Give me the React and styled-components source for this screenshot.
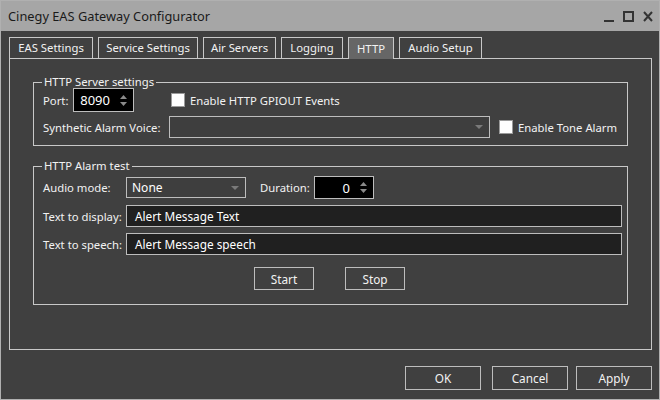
import styled, { createGlobalStyle } from "styled-components";

const GlobalStyle = createGlobalStyle`
  html, body {
    margin: 0;
    padding: 0;
    background: #404040;
  }
  * {
    box-sizing: border-box;
  }
`;

const FONT = `"Noto Sans", "Open Sans", sans-serif`;

const Window = styled.div`
  width: 660px;
  height: 400px;
  display: flex;
  flex-direction: column;
  border: 1px solid #b0b0b0;
  background: #404040;
  font-family: ${FONT};
  font-size: 11.3px;
  color: #f2f2f2;
  overflow: hidden;
`;

const TitleBar = styled.div`
  height: 30px;
  flex: none;
  display: flex;
  align-items: center;
  justify-content: space-between;
  padding: 0 6px 0 7px;
  background: #a6a6a6;
  color: #1a1a1a;
  font-size: 12.8px;
`;

const Controls = styled.div`
  display: flex;
  align-items: center;
  gap: 9px;
  padding-top: 2px;
`;

const Body = styled.div`
  flex: 1;
  display: flex;
  flex-direction: column;
  padding: 6px 7px 0 8px;
`;

const TabStrip = styled.div`
  display: flex;
  gap: 5px;
  height: 21px;
  position: relative;
  z-index: 1;
`;

const Tab = styled.div`
  width: ${(p) => p.$w}px;
  height: ${(p) => (p.$active ? 22 : 21)}px;
  display: flex;
  align-items: center;
  justify-content: center;
  border: 1px solid #c8c8c8;
  border-bottom: none;
  background: ${(p) => (p.$active ? "#666666" : "#404040")};
  color: #f2f2f2;
  padding-bottom: 1px;
`;

const Panel = styled.div`
  height: 292px;
  border: 1px solid #c8c8c8;
  padding: 17px 23px 0 23px;
  display: flex;
  flex-direction: column;
  gap: 14px;
`;

const Group = styled.fieldset`
  margin: 0;
  min-width: 0;
  border: 1px solid #c8c8c8;
  padding: 0 5px ${(p) => p.$pb}px 9px;
  display: flex;
  flex-direction: column;
  gap: ${(p) => p.$gap}px;
`;

const Legend = styled.legend`
  padding: 0 2px;
  margin-left: -1px;
  height: 12px;
  line-height: 12px;
  color: #f2f2f2;
`;

const Row = styled.div`
  display: flex;
  align-items: center;
  height: ${(p) => p.$h || 22}px;
  margin-top: ${(p) => p.$mt || 0}px;
`;

const Label = styled.span`
  width: ${(p) => (p.$w ? `${p.$w}px` : "auto")};
  margin-left: ${(p) => p.$ml || 0}px;
  flex: none;
  white-space: nowrap;
`;

const Spin = styled.div`
  width: ${(p) => p.$w}px;
  height: ${(p) => p.$h}px;
  flex: none;
  display: flex;
  align-items: center;
  justify-content: flex-end;
  background: #000;
  border: 1px solid #bdbdbd;
  padding-right: 6px;
  font-size: 13px;
  color: #fff;
`;

const SpinValue = styled.span`
  margin-right: 10px;
`;

const Arrows = styled.div`
  display: flex;
  flex-direction: column;
  gap: 3px;
`;

const Check = styled.span`
  width: 14px;
  height: 14px;
  flex: none;
  background: #fff;
  border: 1px solid #9a9a9a;
  margin-left: ${(p) => p.$ml}px;
  margin-right: 5px;
`;

const Combo = styled.div`
  width: ${(p) => p.$w}px;
  height: ${(p) => p.$h || 22}px;
  flex: none;
  display: flex;
  align-items: center;
  justify-content: space-between;
  padding: 0 6px 0 5px;
  border: 1px solid #bdbdbd;
  background: #3e3e3e;
  font-size: 12px;
  color: #fff;
`;

const Caret = styled.span`
  width: 0;
  height: 0;
  border-left: 4px solid transparent;
  border-right: 4px solid transparent;
  border-top: 4px solid #7a7a7a;
`;

const TextBox = styled.div`
  width: 496px;
  height: 22px;
  flex: none;
  display: flex;
  align-items: center;
  padding-left: 8px;
  background: #202020;
  border: 1px solid #bdbdbd;
  font-size: 11.8px;
  color: #fff;
`;

const ButtonRow = styled.div`
  display: flex;
  justify-content: ${(p) => p.$justify || "center"};
  gap: ${(p) => p.$gap || 0}px;
  margin-top: ${(p) => p.$mt || 0}px;
  padding-right: ${(p) => p.$pr || 0}px;
`;

const Button = styled.div`
  width: ${(p) => p.$w}px;
  height: ${(p) => p.$h}px;
  margin-left: ${(p) => p.$ml || 0}px;
  display: flex;
  align-items: center;
  justify-content: center;
  border: 1px solid #bdbdbd;
  background: #404040;
  color: #f2f2f2;
  font-size: 11.8px;
`;

const tabs = [
  { name: "EAS Settings", w: 84 },
  { name: "Service Settings", w: 100 },
  { name: "Air Servers", w: 73 },
  { name: "Logging", w: 62 },
  { name: "HTTP", w: 46, active: true },
  { name: "Audio Setup", w: 83 },
];

const SpinArrows = () => (
  <Arrows>
    <svg width="7" height="4" viewBox="0 0 7 4">
      <path d="M0 4 L3.5 0 L7 4 Z" fill="#8a8a8a" />
    </svg>
    <svg width="7" height="4" viewBox="0 0 7 4">
      <path d="M0 0 L3.5 4 L7 0 Z" fill="#8a8a8a" />
    </svg>
  </Arrows>
);

const WindowControls = () => (
  <Controls>
    <svg width="10" height="12" viewBox="0 0 10 12">
      <rect x="0" y="9" width="10" height="2" fill="#333" />
    </svg>
    <svg width="11" height="12" viewBox="0 0 11 12">
      <rect x="1" y="1" width="9" height="9" fill="none" stroke="#333" strokeWidth="2" />
    </svg>
    <svg width="10" height="12" viewBox="0 0 10 12">
      <path d="M1 1 L9 10 M9 1 L1 10" stroke="#333" strokeWidth="2" />
    </svg>
  </Controls>
);

export default function App() {
  return (
    <>
      <GlobalStyle />
      <Window>
        <TitleBar>
          <span>Cinegy EAS Gateway Configurator</span>
          <WindowControls />
        </TitleBar>
        <Body>
          <TabStrip>
            {tabs.map((t) => (
              <Tab key={t.name} $w={t.w} $active={t.active}>
                {t.name}
              </Tab>
            ))}
          </TabStrip>
          <Panel>
            <Group $pb={7} $gap={4}>
              <Legend>HTTP Server settings</Legend>
              <Row $h={24}>
                <Label $w={30}>Port:</Label>
                <Spin $w={61} $h={24}>
                  <SpinValue>8090</SpinValue>
                  <SpinArrows />
                </Spin>
                <Check $ml={37} />
                <Label>Enable HTTP GPIOUT Events</Label>
              </Row>
              <Row>
                <Label $w={126}>Synthetic Alarm Voice:</Label>
                <Combo $w={321}>
                  <span />
                  <Caret />
                </Combo>
                <Check $ml={9} />
                <Label>Enable Tone Alarm</Label>
              </Row>
            </Group>
            <Group $pb={14} $gap={6}>
              <Legend>HTTP Alarm test</Legend>
              <Row $h={23} $mt={4}>
                <Label $w={83}>Audio mode:</Label>
                <Combo $w={120} $h={21}>
                  None
                  <Caret />
                </Combo>
                <Label $w={54} $ml={14}>Duration:</Label>
                <Spin $w={60} $h={23}>
                  <SpinValue>0</SpinValue>
                  <SpinArrows />
                </Spin>
              </Row>
              <Row>
                <Label $w={83}>Text to display:</Label>
                <TextBox>Alert Message Text</TextBox>
              </Row>
              <Row>
                <Label $w={83}>Text to speech:</Label>
                <TextBox>Alert Message speech</TextBox>
              </Row>
              <ButtonRow $gap={31} $mt={6} $pr={6}>
                <Button $w={60} $h={23}>Start</Button>
                <Button $w={60} $h={23}>Stop</Button>
              </ButtonRow>
            </Group>
          </Panel>
          <ButtonRow $justify="flex-end" $mt={16}>
            <Button $w={76} $h={24}>OK</Button>
            <Button $w={76} $h={24} $ml={11}>Cancel</Button>
            <Button $w={76} $h={24} $ml={8}>Apply</Button>
          </ButtonRow>
        </Body>
      </Window>
    </>
  );
}
